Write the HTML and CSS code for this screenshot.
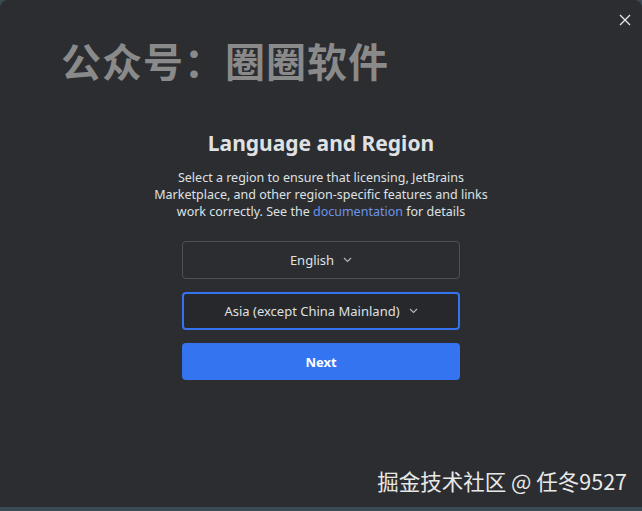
FILE: index.html
```html
<!DOCTYPE html>
<html lang="en">
<head>
  <meta charset="UTF-8" />
  <title>Language and Region</title>
  <link rel="stylesheet" href="styles.css">
</head>
<body>
  <div class="window">
    <button class="close" aria-label="Close">
      <svg width="12" height="12" viewBox="0 0 12 12"><path d="M1 1L11 11M11 1L1 11" stroke="#e8e8e8" stroke-width="1.3"/></svg>
    </button>

    <div class="watermark">公众号：圈圈软件</div>

    <main class="content">
      <h1>Language and Region</h1>
      <p>Select a region to ensure that licensing, JetBrains Marketplace, and other region-specific features and links work correctly. See the <a href="#">documentation</a> for details</p>

      <div class="select">
        English
        <svg width="9" height="6" viewBox="0 0 9 6"><path d="M1 1L4.5 4.5L8 1" fill="none" stroke="#b4b8bf" stroke-width="1.1"/></svg>
      </div>
      <div class="select focused">
        Asia (except China Mainland)
        <svg width="9" height="6" viewBox="0 0 9 6"><path d="M1 1L4.5 4.5L8 1" fill="none" stroke="#b4b8bf" stroke-width="1.1"/></svg>
      </div>
      <button class="next">Next</button>
    </main>

    <div class="credit">掘金技术社区 @ 任冬9527</div>
  </div>
</body>
</html>
```

FILE: styles.css
```css
body {
  margin: 0;
  background: #3b4a52;
  font-family: "Noto Sans", "Noto Sans CJK SC", sans-serif;
  width: 642px;
  height: 511px;
  overflow: hidden;
}

.window {
  position: relative;
  height: 507px;
  background: #2b2d30;
  border-radius: 8px 8px 0 0;
  color: #dfe1e5;
}

.close {
  position: absolute;
  top: 14px;
  right: 11px;
  background: none;
  border: none;
  padding: 0;
  cursor: pointer;
}

.watermark {
  position: absolute;
  top: 31px;
  left: 61px;
  font-family: "Noto Sans CJK SC", sans-serif;
  font-size: 40px;
  font-weight: 700;
  color: #8a8a8a;
  letter-spacing: 1px;
}

.content {
  display: flex;
  flex-direction: column;
  align-items: center;
  padding-top: 126px;
}

h1 {
  margin: 0;
  font-size: 21px;
  font-weight: 700;
  color: #dfe1e5;
  line-height: 34px;
}

p {
  margin: 9px 0 0;
  width: 350px;
  text-align: center;
  font-size: 12.5px;
  line-height: 17px;
  color: #dfe1e5;
}

a {
  color: #6f93e8;
  text-decoration: none;
}

.select {
  box-sizing: border-box;
  width: 278px;
  height: 38px;
  margin-top: 21px;
  border: 1px solid #4e5157;
  border-radius: 4px;
  display: flex;
  align-items: center;
  justify-content: center;
  gap: 9px;
  font-size: 13px;
  color: #dfe1e5;
}

.select + .select {
  margin-top: 13px;
}

.select.focused {
  border: 2px solid #3574f0;
  background: #26282b;
}

.next {
  margin-top: 13px;
  width: 278px;
  height: 37px;
  border: none;
  border-radius: 4px;
  background: #3574f0;
  color: #fff;
  font-family: inherit;
  font-size: 13px;
  font-weight: 700;
}

.credit {
  position: absolute;
  right: 15px;
  bottom: 11px;
  font-family: "Noto Sans CJK SC", sans-serif;
  font-size: 21.5px;
  color: #e8e8e8;
}
```
